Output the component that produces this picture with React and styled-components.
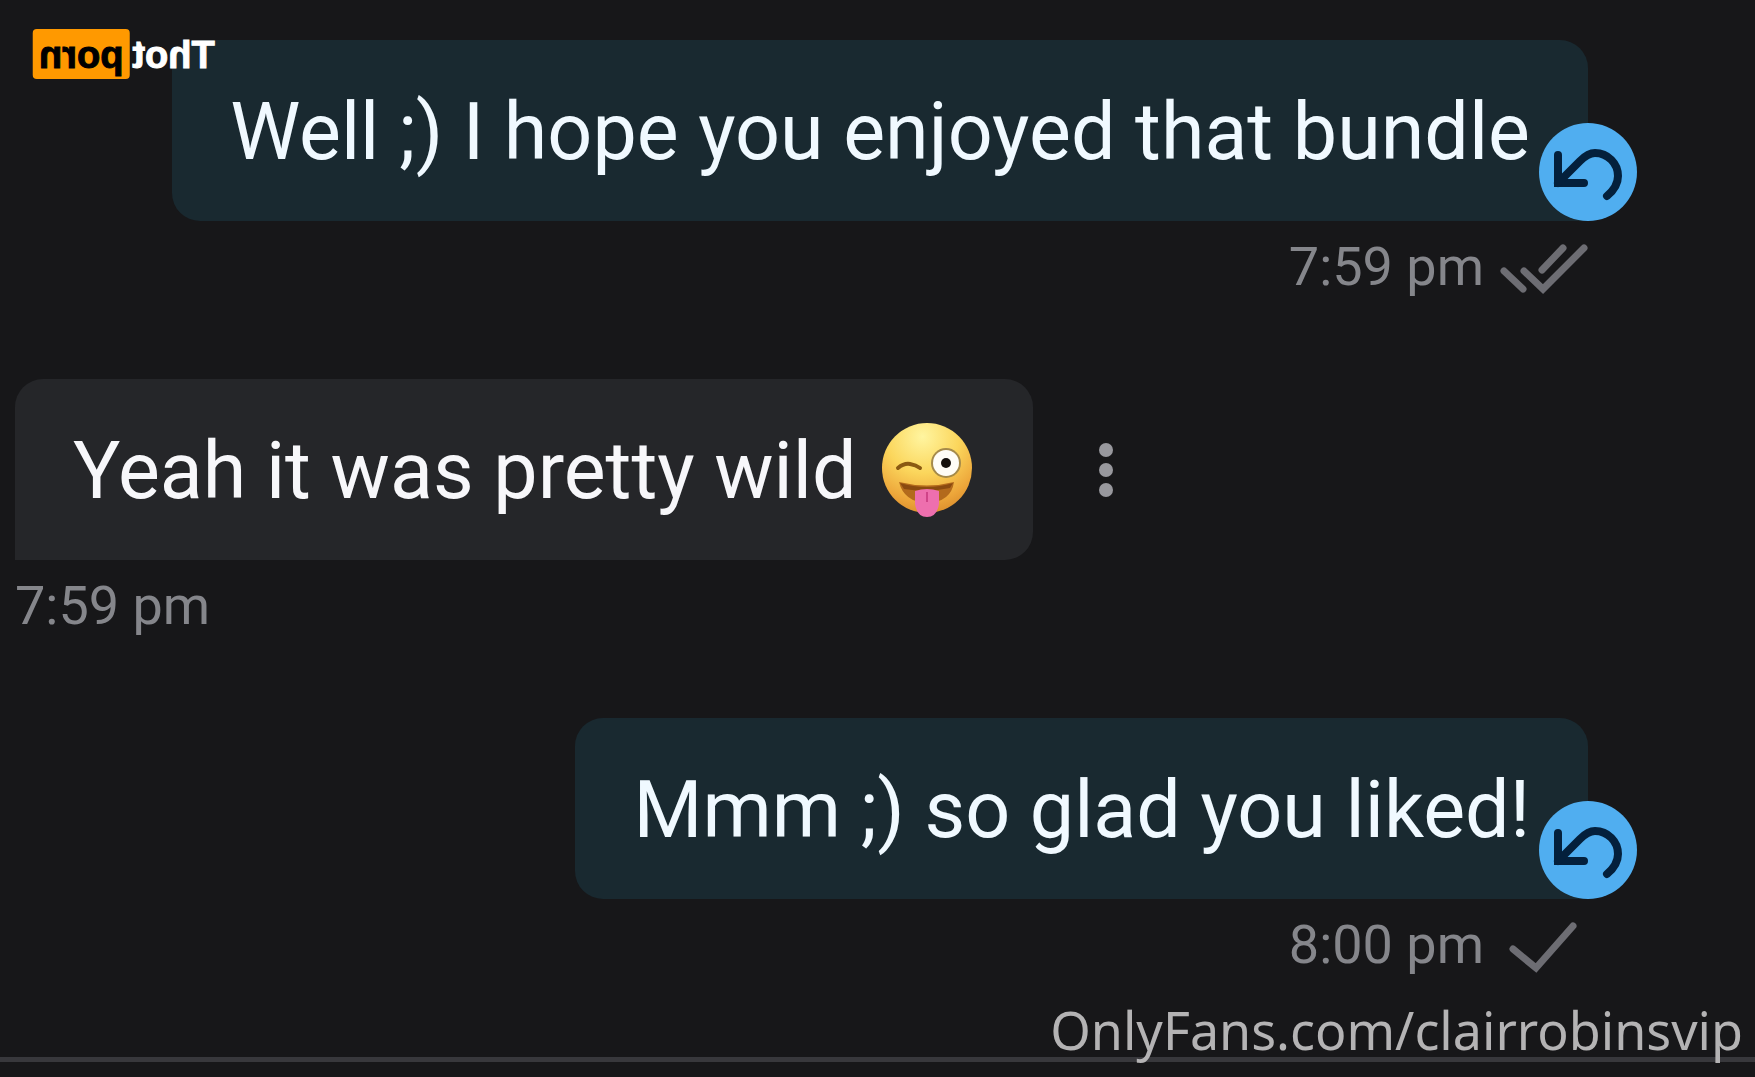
import React from 'react'
import styled, { createGlobalStyle } from 'styled-components'

export default function App() {
  return (
    <Page>
      <GlobalStyle />
      <Logo>
        <span>Thot</span>
        <LogoBadge>porn</LogoBadge>
      </Logo>
      <Thread>
        <Message $sent>
          <BubbleRow>
            <Bubble $sent>
              Well ;) I hope you enjoyed that bundle
              <ReplyButton />
            </Bubble>
          </BubbleRow>
          <Meta>
            <time>7:59 pm</time>
            <Ticks read />
          </Meta>
        </Message>
        <Message>
          <BubbleRow>
            <Bubble>
              Yeah it was pretty wild
              <WinkFace />
            </Bubble>
            <MoreButton type='button' aria-label='More'>
              <i />
              <i />
              <i />
            </MoreButton>
          </BubbleRow>
          <Meta>
            <time>7:59 pm</time>
          </Meta>
        </Message>
        <Message $sent>
          <BubbleRow>
            <Bubble $sent>
              Mmm ;) so glad you liked!
              <ReplyButton />
            </Bubble>
          </BubbleRow>
          <Meta>
            <time>8:00 pm</time>
            <Ticks />
          </Meta>
        </Message>
      </Thread>
      <Composer />
      <Watermark>OnlyFans.com/clairrobinsvip</Watermark>
    </Page>
  )
}

function ReplyButton() {
  return (
    <Reply type='button' aria-label='Reply'>
      <svg width='98' height='98' viewBox='1 1 98 98' fill='none' stroke='#04203c' strokeWidth='8'>
        <path d='M20 33V61H46' strokeLinecap='round' />
        <path d='M20 61L42 39C48 33 52 31 57 31A23 23 0 0 1 80 54Q80 65 69 74' strokeLinecap='round' />
      </svg>
    </Reply>
  )
}

function Ticks({ read }) {
  return (
    <svg width='90' height='64' viewBox='0 1 90 64' fill='none' stroke='#6d6d73' strokeWidth='7' strokeLinecap='round'>
      {read ? (
        <>
          <path d='M6 37L25 55' />
          <path d='M44 36L65 14' />
          <path d='M26 37L45 55L86 14' />
        </>
      ) : (
        <path d='M15 37L38 56L75 14' />
      )}
    </svg>
  )
}

function WinkFace() {
  return (
    <svg width='96' height='100' viewBox='0 2 96 100' role='img' aria-label='Winking face with tongue'>
      <defs>
        <radialGradient id='face' cx='0.45' cy='0.15' r='0.9'>
          <stop offset='0' stopColor='#fff5a0' />
          <stop offset='0.45' stopColor='#fbd65c' />
          <stop offset='0.8' stopColor='#eda63a' />
          <stop offset='1' stopColor='#d98a2b' />
        </radialGradient>
      </defs>
      <circle cx='48' cy='48' r='45' fill='url(#face)' />
      <path d='M19 48Q25 43 31 44Q37 45 41 48' fill='none' stroke='#8a5a12' strokeWidth='4' strokeLinecap='round' />
      <circle cx='67' cy='43' r='15' fill='#a58a4a' />
      <circle cx='67' cy='43' r='13' fill='#fffdf6' />
      <circle cx='67' cy='43' r='5' fill='#15100c' />
      <path d='M20 62Q48 69 75 62Q72 82 48 83Q25 82 20 62Z' fill='#b36a1c' />
      <path d='M21 63Q48 71 74 63L71 68Q48 73 25 69Z' fill='#8a4a10' />
      <path d='M36 71Q48 67 60 71V84Q58 97 48 97Q38 97 36 84Z' fill='#ee6fae' />
      <path d='M48 72V82' stroke='#cf4488' strokeWidth='2' />
    </svg>
  )
}

const GlobalStyle = createGlobalStyle`
  * {
    box-sizing: border-box;
  }

  body {
    margin: 0;
    background: #171719;
  }
`

const Page = styled.div`
  position: relative;
  display: flex;
  flex-direction: column;
  min-height: 100vh;
  overflow: hidden;
  background: #171719;
  font-family: Roboto, sans-serif;
`

const Logo = styled.div`
  position: absolute;
  z-index: 1;
  top: 29px;
  left: 33px;
  display: flex;
  align-items: flex-end;
  gap: 3px;
  transform: scaleX(-1);
  color: #fff;
  font: bold 38px/48px 'Liberation Sans', sans-serif;
  -webkit-text-stroke: 1px;
`

const LogoBadge = styled.span`
  padding: 2px 6px 0;
  border-radius: 4px;
  background: #ff9900;
  color: #000;
`

const Thread = styled.main`
  flex: 1;
  display: flex;
  flex-direction: column;
  gap: 80px;
  padding: 40px 167px 0 15px;
`

const Message = styled.article`
  display: flex;
  flex-direction: column;
  align-items: ${props => props.$sent ? 'flex-end' : 'flex-start'};
  gap: 14px;
`

const BubbleRow = styled.div`
  display: flex;
  align-items: center;
  gap: 48px;
`

const Bubble = styled.div`
  position: relative;
  display: flex;
  align-items: center;
  gap: 22px;
  padding: 42px 58px 38px;
  border-radius: ${props => props.$sent ? '28px 28px 0 28px' : '28px 28px 28px 0'};
  background: ${props => props.$sent ? '#192930' : '#252629'};
  color: ${props => props.$sent ? '#f0f9ff' : '#f7f7fa'};
  font-size: 79px;
  line-height: 101px;
  white-space: nowrap;
`

const Reply = styled.button`
  position: absolute;
  right: -49px;
  bottom: 0;
  width: 98px;
  height: 98px;
  padding: 0;
  border: 0;
  border-radius: 50%;
  background: #50aef0;

  svg {
    display: block;
  }
`

const MoreButton = styled.button`
  display: flex;
  flex-direction: column;
  align-items: center;
  gap: 6px;
  width: 50px;
  padding: 0;
  border: 0;
  background: none;

  i {
    width: 14px;
    height: 14px;
    border-radius: 50%;
    background: #98989d;
  }
`

const Meta = styled.div`
  display: flex;
  align-items: center;
  gap: 14px;
  height: 64px;
  color: #85868b;
  font-size: 54px;
  line-height: 64px;
`

const Composer = styled.footer`
  height: 20px;
  border-top: 5px solid #38383c;
`

const Watermark = styled.div`
  position: absolute;
  right: 12px;
  bottom: 11px;
  color: #b4b3b4;
  font: 52px/72px 'Noto Sans', sans-serif;
`
